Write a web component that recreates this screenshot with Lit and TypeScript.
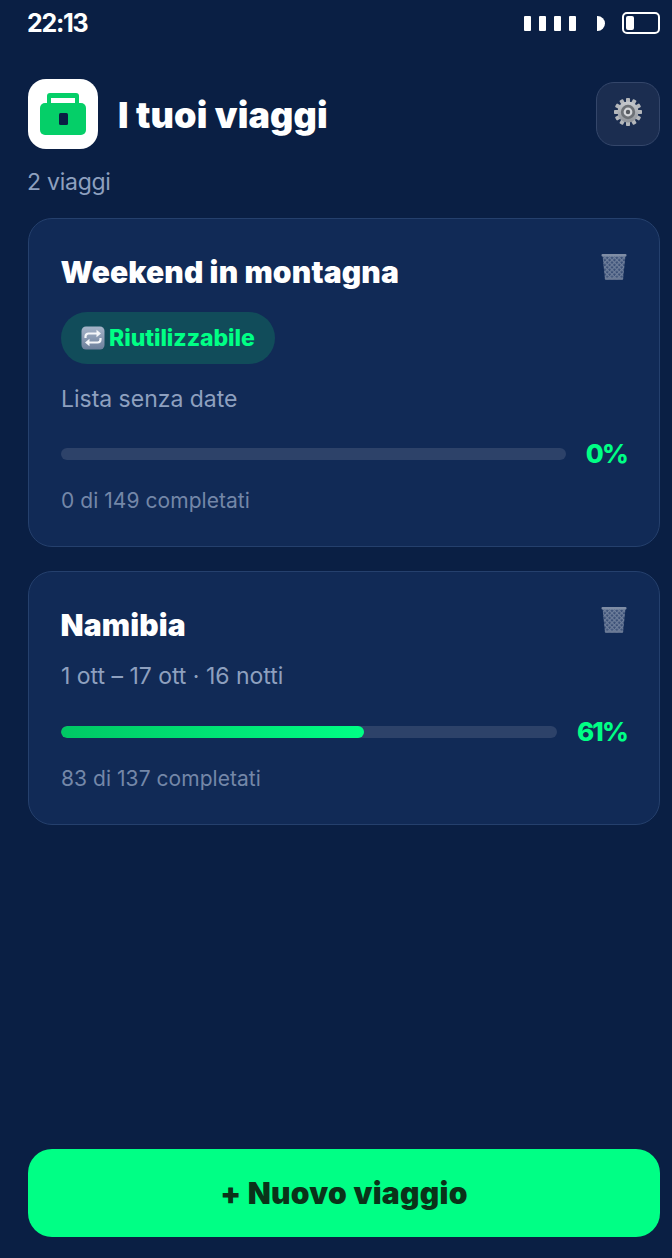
import { LitElement, html, css, svg } from 'lit';
import { customElement } from 'lit/decorators.js';

interface Trip {
  name: string;
  reusable?: boolean;
  meta: string;
  pct: number;
  done: string;
}

const TRIPS: Trip[] = [
  { name: 'Weekend in montagna', reusable: true, meta: 'Lista senza date', pct: 0, done: '0 di 149 completati' },
  { name: 'Namibia', meta: '1 ott – 17 ott · 16 notti', pct: 61, done: '83 di 137 completati' },
];

const gearTeeth = Array.from({ length: 12 }, (_, i) => i * 30);

const gearIcon = html`<svg class="gear" viewBox="0 0 32 32" width="32" height="32">
  <defs>
    <linearGradient id="gm" x1="0" y1="0" x2="0" y2="1"><stop offset="0" stop-color="#c9ccd0"/><stop offset="1" stop-color="#8d9197"/></linearGradient>
  </defs>
  ${gearTeeth.map((a) => svg`<rect x="14" y="2" width="4" height="6" rx="0.8" fill="#b4b7bb" transform="rotate(${a} 16 16)"/>`)}
  <circle cx="16" cy="16" r="10.5" fill="url(#gm)"/>
  <circle cx="16" cy="16" r="7.2" fill="#6d7176"/>
  <circle cx="16" cy="16" r="4.4" fill="#d4d6d9"/>
  <circle cx="16" cy="16" r="2.2" fill="#565a60"/>
</svg>`;

const trashIcon = html`<svg class="trash" viewBox="0 0 28 28" width="28" height="28">
  <defs>
    <pattern id="mesh" width="3.4" height="3.4" patternUnits="userSpaceOnUse" patternTransform="rotate(45)">
      <rect width="3.4" height="3.4" fill="#3c5178"/>
      <rect width="1.2" height="3.4" fill="#6f7f9b"/>
      <rect width="3.4" height="1.2" fill="#6f7f9b"/>
    </pattern>
  </defs>
  <path d="M2.5 3.500h23l-2.400 23a1 1 0 0 1-1 .9H5.900a1 1 0 0 1-1-.9z" fill="url(#mesh)"/>
  <rect x="1.500" y="2" width="25" height="2.400" rx="1" fill="#7f8da5"/>
  <rect x="4.800" y="25.500" width="18.400" height="2.300" rx="1" fill="#6b7a95"/>
</svg>`;

const repeatIcon = html`<svg class="repeat" viewBox="0 0 24 24" width="24" height="24">
  <defs>
    <linearGradient id="rb" x1="0" y1="0" x2="0" y2="1"><stop offset="0" stop-color="#a7b5c9"/><stop offset="1" stop-color="#6c7f9b"/></linearGradient>
  </defs>
  <rect x="0.500" y="0.500" width="23" height="23" rx="4.500" fill="url(#rb)"/>
  <path d="M4.500 12V10.500a3 3 0 0 1 3-3H17" fill="none" stroke="#f4f6f9" stroke-width="2.200"/>
  <path d="M15.500 3.800 20 7.500l-4.500 3.700z" fill="#f4f6f9"/>
  <path d="M19.500 12v1.500a3 3 0 0 1-3 3H7" fill="none" stroke="#f4f6f9" stroke-width="2.200"/>
  <path d="M8.500 12.800 4 16.500l4.500 3.700z" fill="#f4f6f9"/>
</svg>`;

@customElement('app-root')
export class AppRoot extends LitElement {
  static styles = css`
    :host {
      display: block;
      font-family: 'Inter', 'Liberation Sans', sans-serif;
    }
    .screen {
      box-sizing: border-box;
      height: 1258px;
      background: #0a1f44;
      display: flex;
      flex-direction: column;
      padding: 0 12px 21px 28px;
      overflow: hidden;
    }
    .status {
      height: 46px;
      display: flex;
      align-items: center;
      justify-content: space-between;
      color: #fff;
    }
    .time {
      font-size: 25px;
      font-weight: 700;
      letter-spacing: -1.300px;
      margin-left: -1px;
    }
    .indicators {
      display: flex;
      align-items: center;
    }
    .cell {
      width: 7px;
      height: 15px;
      background: #fff;
      border-radius: 1px;
      margin-right: 8px;
    }
    .half {
      width: 8px;
      height: 15px;
      background: #fff;
      border-radius: 0 8px 8px 0;
      margin: 0 17px 0 13px;
    }
    .battery {
      box-sizing: border-box;
      width: 38px;
      height: 22px;
      border: 2px solid #fff;
      border-radius: 5px;
      padding: 2px;
    }
    .battery i {
      display: block;
      width: 8px;
      height: 100%;
      background: #fff;
      border-radius: 2px;
    }
    .header {
      margin-top: 33px;
      height: 70px;
      display: flex;
      align-items: center;
    }
    .logo {
      width: 70px;
      height: 70px;
      border-radius: 18px;
      background: #fff;
      display: flex;
      align-items: center;
      justify-content: center;
    }
    h1 {
      flex: 1;
      margin: 2px 0 0 20px;
      font-size: 36px;
      font-weight: 900;
      color: #fff;
      letter-spacing: 0.150px;
    }
    .settings {
      box-sizing: border-box;
      width: 64px;
      height: 64px;
      border-radius: 18px;
      background: #1b2d50;
      border: 1px solid #34466a;
      display: flex;
      align-items: center;
      justify-content: center;
    }
    .gear {
      margin-bottom: 4px;
    }
    .count {
      margin-top: 19px;
      margin-left: -1px;
      font-size: 23px;
      line-height: 28px;
      color: #8ea0bf;
      letter-spacing: -0.250px;
    }
    .list {
      margin-top: 22px;
      display: flex;
      flex-direction: column;
      gap: 24px;
    }
    .card {
      box-sizing: border-box;
      background: #112a56;
      border: 1px solid #25406d;
      border-radius: 24px;
      padding: 32px 32px 31px;
    }
    .top {
      display: flex;
      justify-content: space-between;
      align-items: flex-start;
    }
    h2 {
      margin: 0 0 0 -0.500px;
      font-size: 30px;
      line-height: 42px;
      font-weight: 900;
      color: #fff;
      letter-spacing: 0.150px;
    }
    .trash {
      display: block;
      margin: 1px -1px 0 0;
    }
    .pill {
      display: inline-flex;
      align-items: center;
      gap: 4px;
      height: 52px;
      margin-top: 19px;
      padding: 0 20px;
      border-radius: 26px;
      background: #114c5a;
      color: #00ff85;
      font-size: 23px;
      font-weight: 800;
      letter-spacing: -0.050px;
    }
    .meta {
      margin-top: 15px;
      font-size: 23px;
      line-height: 30px;
      color: #8ea0bf;
      letter-spacing: -0.020px;
    }
    .reusable .meta {
      margin-top: 20px;
    }
    .progress {
      margin-top: 24px;
      display: flex;
      align-items: center;
      gap: 20px;
    }
    .reusable .progress {
      margin-top: 23px;
    }
    .track {
      flex: 1;
      height: 12px;
      border-radius: 6px;
      background: #2d4269;
      overflow: hidden;
    }
    .fill {
      height: 100%;
      border-radius: 6px;
      background: linear-gradient(90deg, #00c864, #00ff85);
    }
    .pct {
      font-size: 26px;
      line-height: 34px;
      font-weight: 800;
      color: #00ff85;
      letter-spacing: -1.800px;
    }
    .done {
      margin-top: 16px;
      font-size: 21px;
      line-height: 28px;
      color: #7487a8;
      letter-spacing: 0.050px;
    }
    .new {
      margin-top: auto;
      height: 88px;
      border-radius: 24px;
      background: #00ff85;
      color: #0a3319;
      display: flex;
      align-items: center;
      justify-content: center;
      font-size: 30px;
      font-weight: 900;
      letter-spacing: 0.300px;
    }
  `;

  renderCard(t: Trip) {
    return html`<div class="card ${t.reusable ? 'reusable' : ''}">
      <div class="top">
        <h2>${t.name}</h2>
        ${trashIcon}
      </div>
      ${t.reusable ? html`<div class="pill">${repeatIcon}<span>Riutilizzabile</span></div>` : null}
      <div class="meta">${t.meta}</div>
      <div class="progress">
        <div class="track"><div class="fill" style="width:${t.pct}%"></div></div>
        <div class="pct">${t.pct}%</div>
      </div>
      <div class="done">${t.done}</div>
    </div>`;
  }

  render() {
    return html`<div class="screen">
      <div class="status">
        <span class="time">22:13</span>
        <div class="indicators">
          <span class="cell"></span><span class="cell"></span><span class="cell"></span><span class="cell"></span>
          <span class="half"></span>
          <span class="battery"><i></i></span>
        </div>
      </div>
      <div class="header">
        <div class="logo">
          <svg viewBox="0 0 46 42" width="46" height="42">
            <rect x="7" y="0" width="32" height="14" rx="3" fill="#05cf68"/>
            <rect x="11" y="5" width="24" height="6" fill="#fff"/>
            <rect x="0" y="10" width="46" height="32" rx="5" fill="#05cf68"/>
            <rect x="19" y="20" width="9" height="12" rx="1.500" fill="#0a1f44"/>
          </svg>
        </div>
        <h1>I tuoi viaggi</h1>
        <div class="settings">${gearIcon}</div>
      </div>
      <div class="count">2 viaggi</div>
      <div class="list">${TRIPS.map((t) => this.renderCard(t))}</div>
      <div class="new">+ Nuovo viaggio</div>
    </div>`;
  }
}
